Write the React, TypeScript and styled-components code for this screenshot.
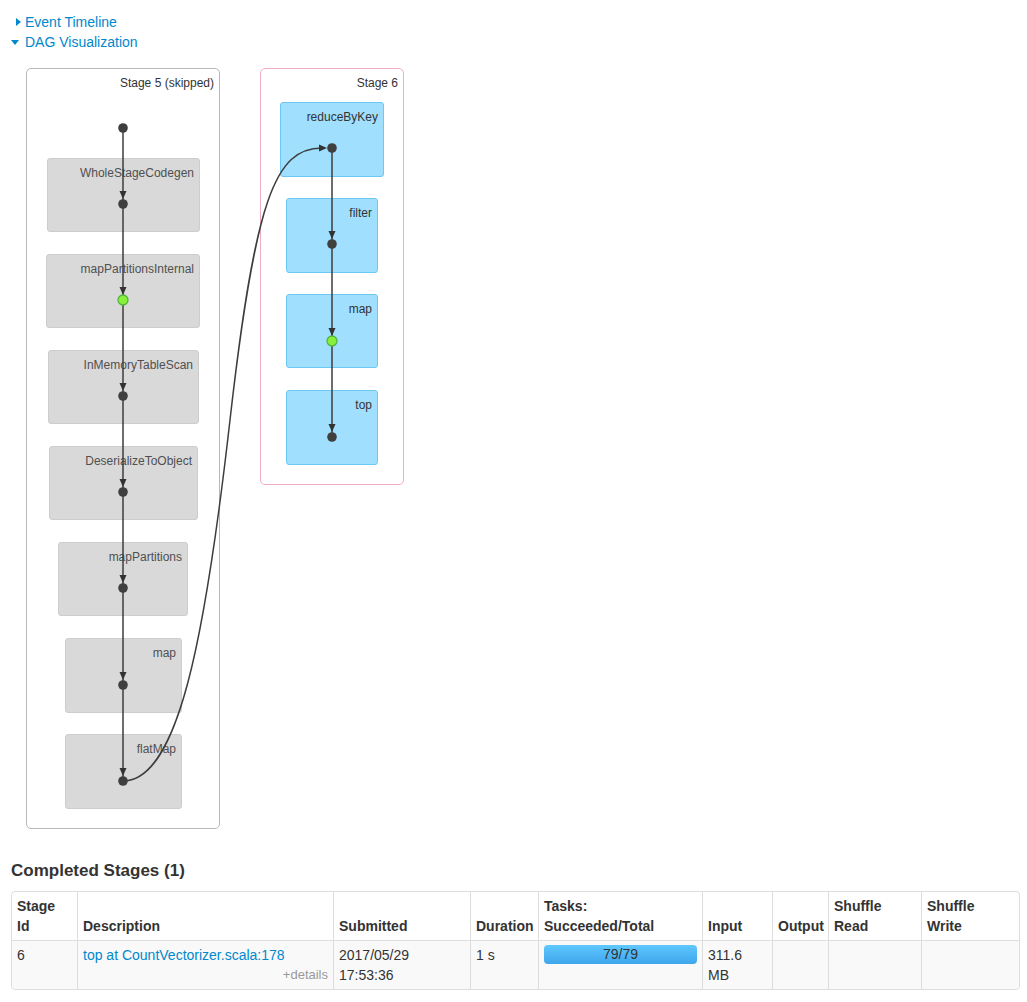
import styled, { createGlobalStyle } from "styled-components";

const GlobalStyle = createGlobalStyle`
  body {
    margin: 0;
    background: #fff;
    font-family: "Liberation Sans", Arial, Helvetica, sans-serif;
    font-size: 14px;
    color: #333;
  }
`;

type Box = { label?: string; x: number; y: number; w: number; h: number };

const stage5Nodes: Box[] = [
  { label: "WholeStageCodegen", x: 47, y: 98, w: 153, h: 74 },
  { label: "mapPartitionsInternal", x: 46, y: 194, w: 154, h: 74 },
  { label: "InMemoryTableScan", x: 48, y: 290, w: 151, h: 74 },
  { label: "DeserializeToObject", x: 49, y: 386, w: 149, h: 74 },
  { label: "mapPartitions", x: 58, y: 482, w: 130, h: 74 },
  { label: "map", x: 65, y: 578, w: 117, h: 75 },
  { label: "flatMap", x: 65, y: 674, w: 117, h: 75 },
];

const stage6Nodes: Box[] = [
  { label: "reduceByKey", x: 280, y: 42, w: 104, h: 75 },
  { label: "filter", x: 286, y: 138, w: 92, h: 75 },
  { label: "map", x: 286, y: 234, w: 92, h: 74 },
  { label: "top", x: 286, y: 330, w: 92, h: 75 },
];

// dots: [x, y, cached]
const stage5Dots: [number, number, boolean][] = [
  [123, 68, false],
  [123, 144, false],
  [123, 240, true],
  [123, 336, false],
  [123, 432, false],
  [123, 528, false],
  [123, 625, false],
  [123, 721, false],
];
const stage6Dots: [number, number, boolean][] = [
  [332, 88, false],
  [332, 184, false],
  [332, 281, true],
  [332, 377, false],
];

const columns = [
  { title: ["Stage", "Id"], width: 65 },
  { title: ["Description"], width: 256 },
  { title: ["Submitted"], width: 137 },
  { title: ["Duration"], width: 68 },
  { title: ["Tasks:", "Succeeded/Total"], width: 164 },
  { title: ["Input"], width: 70 },
  { title: ["Output"], width: 56 },
  { title: ["Shuffle", "Read"], width: 93 },
  { title: ["Shuffle", "Write"], width: 98 },
];

function App() {
  const arrowDown = (x: number, y: number) =>
    `M${x - 3.5},${y - 13} L${x + 3.5},${y - 13} L${x},${y - 5} Z`;

  const chain = (dots: [number, number, boolean][]) =>
    dots.slice(1).map(([x, y], i) => (
      <g key={i}>
        <line x1={x} y1={dots[i][1]} x2={x} y2={y} />
        <path d={arrowDown(x, y)} className="head" />
      </g>
    ));

  const dots = (list: [number, number, boolean][]) =>
    list.map(([x, y, cached], i) => (
      <circle
        key={i}
        cx={x}
        cy={y}
        r={cached ? 5 : 4.8}
        className={cached ? "cached" : "dot"}
      />
    ));

  return (
    <>
      <GlobalStyle />
      <Page>
        <Toggles>
          <ToggleLink>
            <Caret $open={false} />
            Event Timeline
          </ToggleLink>
          <ToggleLink>
            <Caret $open />
            DAG Visualization
          </ToggleLink>
        </Toggles>

        <DagCanvas>
          <Cluster $kind="skipped" style={{ left: 26, top: 8, width: 194, height: 761 }}>
            Stage 5 (skipped)
          </Cluster>
          <Cluster $kind="active" style={{ left: 260, top: 8, width: 144, height: 417 }}>
            Stage 6
          </Cluster>
          {stage5Nodes.map((n) => (
            <Node
              key={n.label}
              $kind="skipped"
              style={{ left: n.x, top: n.y, width: n.w, height: n.h }}
            >
              {n.label}
            </Node>
          ))}
          {stage6Nodes.map((n) => (
            <Node
              key={n.label}
              $kind="active"
              style={{ left: n.x, top: n.y, width: n.w, height: n.h }}
            >
              {n.label}
            </Node>
          ))}
          <Edges width="420" height="780" viewBox="0 0 420 780">
            {chain(stage5Dots)}
            {chain(stage6Dots)}
            <path
              className="curve"
              d="M123,721 C178,721 205,580 230,360 C255,140 275,88 322,88"
            />
            <path d="M319,84.5 L319,91.5 L327,88 Z" className="head" />
            {dots(stage5Dots)}
            {dots(stage6Dots)}
          </Edges>
        </DagCanvas>

        <SectionTitle>Completed Stages (1)</SectionTitle>
        <Table>
          <colgroup>
            {columns.map((c) => (
              <col key={c.title.join(" ")} style={{ width: c.width }} />
            ))}
          </colgroup>
          <thead>
            <tr>
              {columns.map((c) => (
                <Th key={c.title.join(" ")}>
                  {c.title.map((line, i) => (
                    <HeadLine key={i}>{line}</HeadLine>
                  ))}
                </Th>
              ))}
            </tr>
          </thead>
          <tbody>
            <tr>
              <Td>6</Td>
              <Td>
                <Link>top at CountVectorizer.scala:178</Link>
                <Details>+details</Details>
              </Td>
              <Td>
                2017/05/29
                <br />
                17:53:36
              </Td>
              <Td>1 s</Td>
              <Td>
                <Progress>79/79</Progress>
              </Td>
              <Td>
                311.6
                <br />
                MB
              </Td>
              <Td />
              <Td />
              <Td />
            </tr>
          </tbody>
        </Table>
      </Page>
    </>
  );
}

export default App;

const Page = styled.div`
  padding: 12px 9px 20px 11px;
  width: 1007px;
`;

const Toggles = styled.div`
  display: flex;
  flex-direction: column;
`;

const ToggleLink = styled.a`
  display: flex;
  align-items: center;
  height: 20px;
  color: #0088cc;
  font-size: 14px;
  cursor: pointer;
  text-decoration: none;
`;

const Caret = styled.span<{ $open: boolean }>`
  width: 14px;
  display: inline-flex;
  justify-content: ${(p) => (p.$open ? "flex-start" : "center")};
  &::before {
    content: "";
    width: 0;
    height: 0;
    ${(p) =>
      p.$open
        ? `border-left: 4.5px solid transparent;
           border-right: 4.5px solid transparent;
           border-top: 5px solid #0088cc;`
        : `border-top: 4.5px solid transparent;
           border-bottom: 4.5px solid transparent;
           border-left: 5px solid #0088cc;`}
  }
`;

const DagCanvas = styled.div`
  position: relative;
  margin: 8px 0 0 -11px;
  width: 420px;
  height: 800px;
`;

const Cluster = styled.div<{ $kind: "skipped" | "active" }>`
  position: absolute;
  box-sizing: border-box;
  border: 1px solid ${(p) => (p.$kind === "active" ? "#f4adbe" : "#b8b8b8")};
  border-radius: 5px;
  padding: 7px 5px 0 0;
  text-align: right;
  font-size: 12px;
  line-height: 14px;
  color: #333;
  background: #fff;
`;

const Node = styled.div<{ $kind: "skipped" | "active" }>`
  position: absolute;
  box-sizing: border-box;
  border-radius: 3px;
  border: 1px solid ${(p) => (p.$kind === "active" ? "#6cc8f5" : "#cdcdcd")};
  background: ${(p) => (p.$kind === "active" ? "#a0dffe" : "#d9d9d9")};
  color: ${(p) => (p.$kind === "active" ? "#333" : "#505050")};
  padding: 7px 5px 0 0;
  text-align: right;
  font-size: 12px;
  line-height: 14px;
`;

const Edges = styled.svg`
  position: absolute;
  left: 0;
  top: 0;
  line {
    stroke: #3d3d3d;
    stroke-width: 1.5;
  }
  .curve {
    fill: none;
    stroke: #3d3d3d;
    stroke-width: 1.5;
  }
  .head {
    fill: #333;
  }
  .dot {
    fill: #3f3f3f;
  }
  .cached {
    fill: #86f03a;
    stroke: #52b53a;
    stroke-width: 1.3;
  }
`;

const SectionTitle = styled.h4`
  margin: 0 0 9px;
  font-size: 17px;
  font-weight: bold;
  line-height: 22px;
  color: #333;
`;

const Table = styled.table`
  width: 1007px;
  table-layout: fixed;
  border-collapse: separate;
  border-spacing: 0;
  border: 1px solid #ddd;
  border-radius: 4px;
  font-size: 14px;
  line-height: 20px;
`;

const Th = styled.th`
  text-align: left;
  vertical-align: bottom;
  font-weight: bold;
  padding: 4px 5px 4px;
  border-left: 1px solid #ddd;
  border-bottom: 1px solid #ddd;
  &:first-child {
    border-left: none;
  }
`;

const HeadLine = styled.span`
  display: block;
`;

const Td = styled.td`
  vertical-align: top;
  padding: 4px 5px 4px;
  background: #f9f9f9;
  border-left: 1px solid #ddd;
  &:first-child {
    border-left: none;
    border-bottom-left-radius: 4px;
  }
  &:last-child {
    border-bottom-right-radius: 4px;
  }
`;

const Link = styled.a`
  display: block;
  color: #0088cc;
  text-decoration: none;
`;

const Details = styled.span`
  display: block;
  text-align: right;
  color: #999;
  font-size: 13px;
`;

const Progress = styled.div`
  height: 19px;
  border-radius: 4px;
  background: linear-gradient(to bottom, #5ec8fe, #3fa6ec);
  text-align: center;
  font-size: 14px;
  line-height: 19px;
  color: #333;
`;
